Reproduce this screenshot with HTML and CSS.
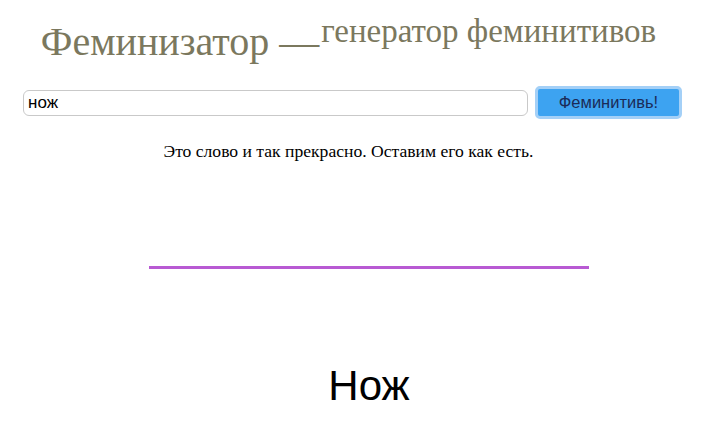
FILE: index.html
```html
<!DOCTYPE html>
<html lang="ru">
<head>
    <meta charset="UTF-8">
    <meta name="viewport" content="width=device-width, initial-scale=1.0">
    <title>Феминизатор — генератор феминитивов</title>
    <link rel="stylesheet" href="styles.css">
</head>
<body>
    <div class="top">
        <h1 class="title">Феминизатор —<span class="subtitle">генератор феминитивов</span></h1>

        <div class="form-row">
            <input type="text" id="word" class="word-input" value="нож">
            <button class="fem-button">Феминитивь!</button>
        </div>

        <p class="message">Это слово и так прекрасно. Оставим его как есть.</p>
    </div>

    <div class="result">
        <div class="divider"></div>
        <div class="result-word">Нож</div>
    </div>
</body>
</html>
```

FILE: styles.css
```css
body {
    margin: 0;
    background-color: #fff;
    color: #000;
    font-family: "Liberation Serif", "Times New Roman", serif;
}
.top {
    padding-right: 20px;
}
.title {
    margin: 0;
    padding-top: 15px;
    text-align: center;
    font-weight: normal;
    font-size: 40px;
    line-height: 44px;
    color: #7b785e;
}
.subtitle {
    font-size: 33px;
    line-height: 33px;
    vertical-align: 13px;
    margin-left: 2px;
}
.form-row {
    display: flex;
    align-items: center;
    gap: 7px;
    margin-top: 22px;
    margin-left: 23px;
}
.word-input {
    width: 505px;
    height: 26px;
    box-sizing: border-box;
    padding: 0 4px;
    border: 1px solid #c9c9c9;
    border-radius: 6px;
    font-family: "Liberation Sans", Arial, sans-serif;
    font-size: 17px;
    color: #000;
    outline: none;
}
.fem-button {
    width: 147px;
    height: 33px;
    box-sizing: border-box;
    border: 3px solid #a4d0f7;
    border-radius: 5px;
    background-color: #3da3f1;
    color: #1b2b58;
    font-family: "Liberation Sans", Arial, sans-serif;
    font-size: 16.5px;
    cursor: pointer;
}
.message {
    margin: 21px 0 0;
    text-align: center;
    font-size: 17.6px;
    line-height: 22px;
}
.result {
    padding-left: 21px;
    display: flex;
    flex-direction: column;
    align-items: center;
}
.divider {
    width: 440px;
    height: 3px;
    margin-top: 104px;
    background-color: #b85ad3;
}
.result-word {
    margin-top: 93px;
    font-family: "Liberation Sans", Arial, sans-serif;
    font-size: 42px;
    line-height: 48px;
}
```
